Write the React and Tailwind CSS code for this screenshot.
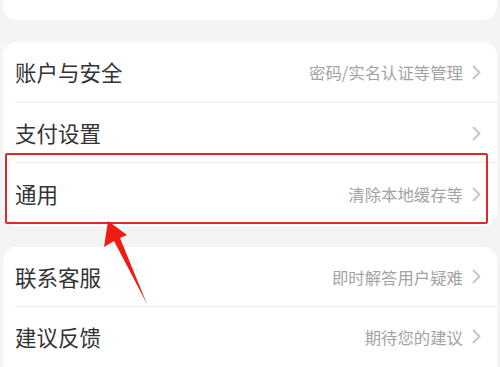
const font = { fontFamily: '"Noto Sans CJK SC", "Noto Sans", sans-serif' };

function Chevron() {
  return (
    <svg width="9" height="15" viewBox="0 0 9 15" fill="none">
      <polyline points="1.5,1.5 7.5,7.5 1.5,13.5" stroke="#c8c8c8" strokeWidth="2" strokeLinecap="round" strokeLinejoin="round" />
    </svg>
  );
}

function Row({ title, sub, last, h = "h-[60px]" }) {
  return (
    <div className={`relative flex items-center ${h} pl-[12px] pr-[16px]`}>
      <span className="text-[21.5px] text-[#333333]">{title}</span>
      <div className="ml-auto flex items-center gap-[9px]">
        {sub && <span className="text-[16.4px] text-[#a3a3a3]">{sub}</span>}
        <Chevron />
      </div>
      {!last && <div className="absolute bottom-0 left-[12px] right-0 h-px bg-[#ececec]" />}
    </div>
  );
}

export default function App() {
  return (
    <div className="relative h-[367px] w-[500px] overflow-hidden bg-[#f4f4f4]" style={font}>
      <div className="mx-[3px] h-[20px] rounded-b-[14px] bg-white" />
      <div className="mx-[3px] mt-[22px] rounded-[14px] bg-white">
        <Row title="账户与安全" sub="密码/实名认证等管理" h="h-[61px]" />
        <Row title="支付设置" />
        <Row title="通用" sub="清除本地缓存等" last h="h-[63px]" />
      </div>
      <div className="mx-[3px] mt-[21px] rounded-t-[14px] bg-white">
        <Row title="联系客服" sub="即时解答用户疑难" />
        <Row title="建议反馈" sub="期待您的建议" last />
      </div>

      <div className="absolute left-[5px] top-[153px] h-[71px] w-[483px] rounded-[2px] border-[2.5px] border-[#e32626]" />
      <svg className="absolute left-0 top-0" width="500" height="367" viewBox="0 0 500 367">
        <polygon
          points="108,221 104,247 114,241 147,304 120,238 127,235"
          fill="#ee1c12"
        />
      </svg>
    </div>
  );
}
